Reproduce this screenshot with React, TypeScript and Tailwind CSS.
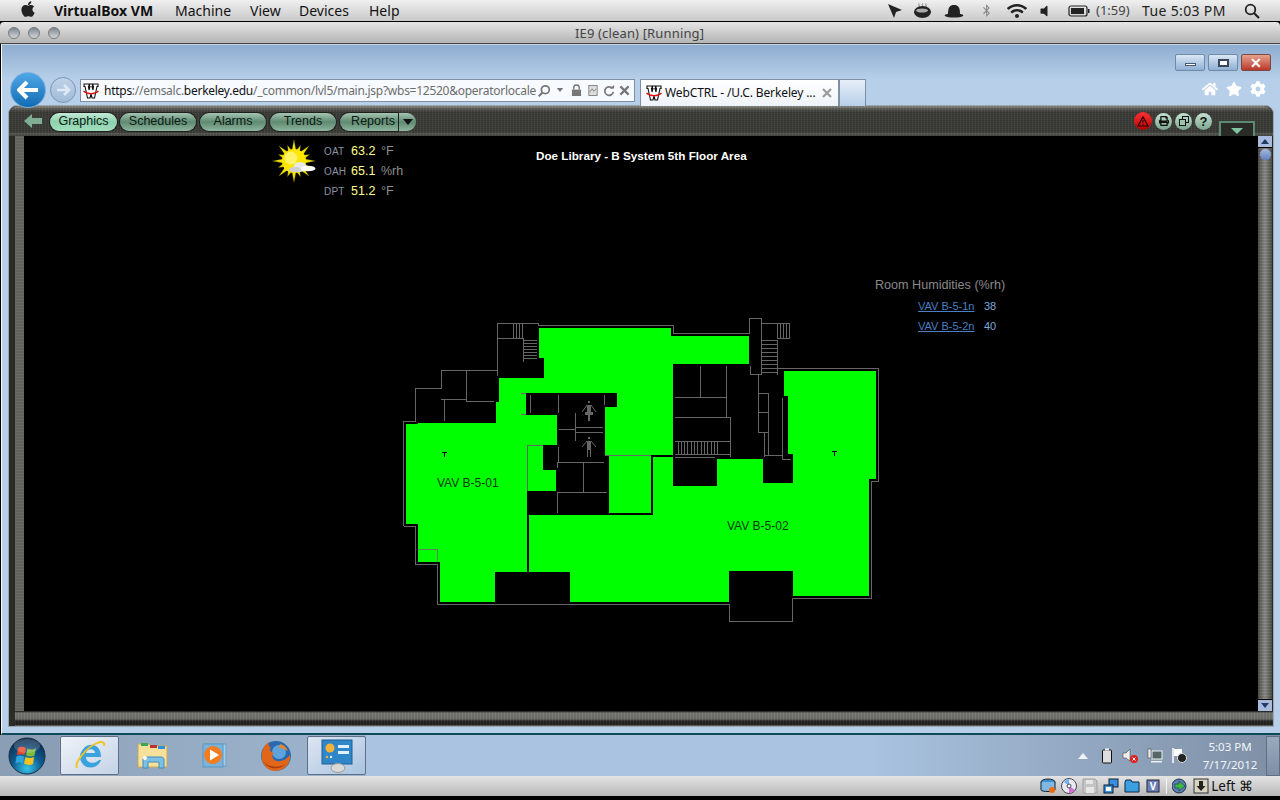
import React from "react";
import { FaApple, FaBluetoothB, FaWifi, FaVolumeOff, FaHome, FaStar, FaCog, FaPrint } from "react-icons/fa";

const green: string[] = [
  "539,328 671,328 671,336 749,336 749,364 673,364 673,455 605,455 605,407 617,407 617,393 526,393 526,415 557,415 557,445 527,445 527,572 495,572 495,602 440,602 440,562 418,562 418,524 406,524 406,424 418,424 418,423 496,423 496,402 499,402 499,378 544,378 544,358 539,358",
  "528,445 543,445 543,470 556,470 556,491 528,491",
  "609,456 651,456 651,513 609,513",
  "529,515 653,515 653,457 673,457 673,486 717,486 717,459 763,459 763,483 793,483 793,454 788,454 788,396 784,396 784,371 876,371 876,479 869,479 869,596 793,596 793,571 729,571 729,602 570,602 570,572 529,572",
];

const lines: string[] = [
  "403.5,526 403.5,421.5 415.5,421.5 415.5,388.5 441.5,388.5 441.5,370.5 497.5,370.5",
  "403.5,526 415.5,526 415.5,564.5 437.5,564.5 437.5,604.5 729.5,604.5 729.5,621.5 792.5,621.5 792.5,598.5 871.5,598.5 871.5,481.5 878.5,481.5 878.5,368.5 777.5,368.5",
  "497.5,376 497.5,323.5 538.5,323.5 538.5,325.5 673.5,325.5 673.5,333.5 749.5,333.5 749.5,318.5 761.5,318.5 761.5,374.5 750.5,374.5 750.5,366",
  "761.5,323.5 789.5,323.5 789.5,338.5 777,338.5",
  "777.5,340 777.5,375",
  "497.5,338.5 523.5,338.5 523.5,362",
  "441,399.5 466.5,399.5",
  "466.5,370 466.5,401.5 494,401.5",
  "444.5,399 444.5,421",
  "521,393.5 526,393.5",
  "521,414.5 526,414.5",
  "530.5,395 530.5,413",
  "558.5,395 558.5,413",
  "604.5,395 604.5,405",
  "575.5,413 575.5,441",
  "559,429.5 575,429.5",
  "576,427.5 603,427.5",
  "576,432.5 603,432.5",
  "558.5,447 558.5,462",
  "557.5,468 557.5,462.5 604,462.5",
  "583.5,462 583.5,492",
  "558,492.5 607,492.5",
  "557.5,492 557.5,513",
  "527.5,491 527.5,445.5 543,445.5",
  "605,455.5 651,455.5",
  "700.5,366 700.5,397",
  "726.5,366 726.5,417",
  "675,397.5 726,397.5",
  "675,417.5 730.5,417.5 730.5,457",
  "675,441.5 730,441.5",
  "675,454.5 730,454.5",
  "675,457.5 715,457.5",
  "758.5,374 758.5,432.5 768.5,432.5",
  "758,393.5 768.5,393.5 768.5,455",
  "758,412.5 768,412.5",
  "764.5,432 764.5,457",
  "764.5,455.5 782,455.5",
  "782.5,398 782.5,459.5 791,459.5",
];

const stairs = (): string[] => {
  const r: string[] = [];
  for (const x of [777.5, 780.5, 783.5, 786.5]) r.push(`${x},323 ${x},338`);
  for (let i = 0; i < 9; i++) r.push(`761,${340.5 + i * 4} 777,${340.5 + i * 4}`);
  for (const x of [513.5, 516.5, 519.5, 522.5]) r.push(`${x},323 ${x},338`);
  for (let i = 0; i < 7; i++) r.push(`523,${340.5 + i * 3} 537,${340.5 + i * 3}`);
  for (let i = 0; i < 13; i++) { const x = 677.5 + i * 3.3; r.push(`${Math.round(x) + 0.5},441 ${Math.round(x) + 0.5},454`); }
  return r;
};

function FloorPlan() {
  return (
    <svg className="absolute left-[376px] top-[179px]" width="490" height="310" viewBox="400 315 490 310" shapeRendering="crispEdges">
      {green.map((p) => <polygon key={p} points={p} fill="#00ff00" />)}
      <g fill="none" stroke="#666666" strokeWidth="1">
        {lines.concat(stairs()).map((p) => <polyline key={p} points={p} />)}
      </g>
      <path d="M418 549.5H437.500V562" fill="none" stroke="#5f7f5f" />
      <g fill="none" stroke="#000" strokeWidth="1">
        <path d="M442 452.500H447M444.500 452V457" />
        <path d="M832 451.500H837M834.500 451V456" />
      </g>
      <g fill="#666666">
        <rect x="588" y="401" width="2" height="2" />
        <rect x="587" y="405" width="4" height="8" />
        <rect x="585" y="412" width="8" height="3" />
        <rect x="588" y="415" width="2" height="6" />
        <rect x="588" y="437" width="2" height="2" />
        <rect x="587" y="441" width="4" height="9" />
        <rect x="587" y="450" width="1" height="7" />
        <rect x="590" y="450" width="1" height="7" />
      </g>
      <g fill="none" stroke="#666666" shapeRendering="auto">
        <path d="M582 412L587 405M596 412L591 405" />
        <path d="M582 447L587 441M596 447L591 441" />
      </g>
    </svg>
  );
}

function WIcon() {
  return (
    <svg width="16" height="16" viewBox="0 0 16 16" className="shrink-0">
      <path d="M1 1H6V3.500H5.500L6 7 7 3.500H6.500V1H9.500V3.500H9L10 7 10.500 3.500H10V1H15V3.500H14L11.500 15H9L8 11 7 15H4.500L2 3.500H1Z" fill="#fff" stroke="#111" strokeWidth="1.100" />
      <path d="M0.500 8C4 11.500 12 11.500 15.500 8" fill="none" stroke="#e01010" strokeWidth="1.200" />
    </svg>
  );
}

function Pill({ label, active, extra }: { label: string; active?: boolean; extra?: string }) {
  return (
    <div className={`h-[18px] rounded-full flex items-center justify-center text-[12.5px] font-['Liberation_Sans',Arial,sans-serif] text-[#0c1a12] shadow-[0_0_0_1px_#1c1f1c] ${active ? "bg-gradient-to-b from-[#c3e9d6] via-[#8cd2ae] to-[#a4dec0]" : "bg-gradient-to-b from-[#a5c4b2] via-[#5f8a72] to-[#8fb59f]"} ${extra ?? ""}`}>
      {label}
    </div>
  );
}

function RoundBtn({ children }: { children: React.ReactNode }) {
  return (
    <div className="w-[17px] h-[17px] rounded-full bg-gradient-to-b from-[#c4e0d0] to-[#7ba78f] flex items-center justify-center text-[#111]">
      {children}
    </div>
  );
}

function Weather() {
  const rays = Array.from({ length: 16 }, (_, i) => i * 22.5);
  return (
    <svg width="44" height="44" viewBox="-22 -22 44 44">
      {rays.map((a, i) => (
        <polygon key={a} points={`-2.400,-9 2.400,-9 0,${i % 2 ? -17 : -21.500}`} fill="#f4e400" stroke="#3a3a00" strokeWidth="0.300" transform={`rotate(${a})`} />
      ))}
      <circle r="12" fill="#ffe600" />
      <circle cx="-3" cy="-3" r="6.500" fill="#fff36a" />
      <ellipse cx="6" cy="6" rx="6.500" ry="5" fill="#e8e8e8" />
      <ellipse cx="14" cy="7.500" rx="7.500" ry="2.800" fill="#ffffff" />
      <ellipse cx="1" cy="8.500" rx="6" ry="2.800" fill="#cfcfcf" />
    </svg>
  );
}

function WRow({ l, v, u }: { l: string; v: string; u: string }) {
  return (
    <div className="flex h-[20px] items-center">
      <span className="w-[27px] text-[10px] tracking-[0.2px] text-[#8c93a3]">{l}</span>
      <span className="w-[30px] text-[12.5px] text-[#ffff8c]">{v}</span>
      <span className="text-[12.5px] text-[#8f8f8f]">{u}</span>
    </div>
  );
}

function Orb() {
  return (
    <svg width="38" height="38" viewBox="0 0 38 38">
      <defs>
        <radialGradient id="orb" cx="50%" cy="85%" r="80%">
          <stop offset="0" stopColor="#35c5e8" />
          <stop offset="0.5" stopColor="#0f5e92" />
          <stop offset="1" stopColor="#0a2a4e" />
        </radialGradient>
      </defs>
      <circle cx="19" cy="19" r="18" fill="url(#orb)" stroke="#1a2e44" />
      <path d="M10 11C13 9 15 10 18 11L16.500 18C14 17 12 17 9 18Z" fill="#e8482a" />
      <path d="M19.500 11.500C22 13 25 13 28 11L26.500 18.500C24 20 21 19.500 18 18.500Z" fill="#7fba3a" />
      <path d="M8.500 19.500C11 18 14 18.500 16 19.500L15 26C12 25 10 25 7.500 26.500Z" fill="#2fa5e0" />
      <path d="M17.500 20C20 21 23 21.500 26 20L25 27C22 28.500 19 28 16 26.500Z" fill="#f5c21c" />
      <ellipse cx="19" cy="9" rx="13" ry="7" fill="#ffffff" opacity="0.18" />
    </svg>
  );
}

function IEIcon() {
  return (
    <svg width="30" height="32" viewBox="0 0 30 32">
      <path d="M5 15C8 6 14 4 18 5C23 6 26 10 26 17H11C11 23 19 25 24 20H26C23 29 11 30 7 23C5 20 5 18 5 15ZM11 13H20C20 8 12 8 11 13Z" fill="#3ba2e0" />
      <path d="M2 28C-1 24 10 8 22 3C27 1 30 2 29 6" fill="none" stroke="#f4c21a" strokeWidth="1.800" />
    </svg>
  );
}

function FolderIcon() {
  return (
    <svg width="32" height="30" viewBox="0 0 32 30">
      <path d="M1 3H12L14 5H30V26H1Z" fill="#f7e09a" stroke="#c9a85a" />
      <rect x="4" y="2" width="7" height="3" fill="#3aa655" />
      <rect x="13" y="4" width="7" height="3" fill="#b33" />
      <rect x="21" y="5" width="7" height="3" fill="#2f8fd8" />
      <path d="M6 27V19C6 17 7 16 9 16H24C26 16 27 17 27 19V27H22V21H11V27Z" fill="#7cc0e6" stroke="#3f8dbc" />
      <circle cx="8" cy="17" r="2" fill="#fff" />
    </svg>
  );
}

function WMPIcon() {
  return (
    <svg width="32" height="28" viewBox="0 0 32 28">
      <rect x="7" y="2" width="20" height="22" fill="#a5cbe6" stroke="#6aa0c8" />
      <rect x="4" y="2" width="20" height="23" fill="#79b2da" stroke="#5f96bf" />
      <circle cx="14" cy="13" r="9" fill="#f47c20" />
      <path d="M11 7.500L20 13 11 18.500Z" fill="#fff" />
    </svg>
  );
}

function FirefoxIcon() {
  return (
    <svg width="32" height="32" viewBox="0 0 32 32">
      <circle cx="16" cy="16" r="15" fill="#2a68b0" />
      <circle cx="19" cy="12" r="7" fill="#5ea4dc" />
      <path d="M2 13C3 7 6 4 9 2C8 5 9 7 11 7C9 9 10 12 14 13C11 15 12 20 17 21C21 22 26 20 30 15C31 24 24 31 15 31C6 31 0 22 2 13Z" fill="#e0671a" />
      <path d="M4 22C8 29 19 31 26 24C20 28 10 28 4 22Z" fill="#a83a10" />
      <path d="M20 4C24 5 27 8 28 11C25 9 22 8 19 8Z" fill="#e8862a" />
    </svg>
  );
}

function PanelIcon() {
  return (
    <svg width="32" height="34" viewBox="0 0 32 34">
      <rect x="1" y="1" width="30" height="24" fill="#2f86c8" stroke="#1f5f96" />
      <circle cx="9" cy="9" r="4.500" fill="#f5b13a" />
      <rect x="17" y="6" width="11" height="3" fill="#dff0ff" />
      <rect x="17" y="12" width="11" height="3" fill="#dff0ff" />
      <circle cx="6" cy="18" r="1.200" fill="#f5b13a" />
      <circle cx="10" cy="18" r="1.200" fill="#dff0ff" />
      <ellipse cx="17" cy="29" rx="7" ry="4.500" fill="#d8d8d8" stroke="#999" />
    </svg>
  );
}

function MiniStatusIcons() {
  return (
    <div className="flex items-center h-[20px] gap-[5px]">
      <svg width="16" height="16" viewBox="0 0 16 16"><ellipse cx="8" cy="4" rx="7" ry="3" fill="#3f8fd0" stroke="#123" /><path d="M1 4V12C1 14 15 14 15 12V4" fill="#7fb8e0" stroke="#123" /><circle cx="12" cy="12" r="3" fill="#f06a10" /></svg>
      <svg width="16" height="16" viewBox="0 0 16 16"><circle cx="8" cy="8" r="7.500" fill="#e8e8f0" stroke="#445" /><path d="M8 8L3 4A7 7 0 0 1 8 1Z" fill="#70b0f0" /><path d="M8 8L14 12A7 7 0 0 1 8 15Z" fill="#d070d0" /><circle cx="8" cy="8" r="2" fill="#fff" stroke="#445" /></svg>
      <svg width="16" height="16" viewBox="0 0 16 16"><path d="M1 1H13L15 3V15H1Z" fill="#c4c4c4" stroke="#a0a0a0" /><rect x="4" y="2" width="7" height="4" fill="#e6e6e6" /><rect x="4" y="9" width="8" height="6" fill="#e6e6e6" /></svg>
      <svg width="16" height="16" viewBox="0 0 16 16"><rect x="6" y="1" width="9" height="8" fill="#3b8fe0" stroke="#123" /><rect x="1" y="7" width="9" height="8" fill="#3b8fe0" stroke="#123" /><rect x="3" y="9" width="5" height="4" fill="#fff" /></svg>
      <svg width="16" height="16" viewBox="0 0 16 16"><path d="M1 4L2 2H7L8 4H15V14H1Z" fill="#3aa0e0" stroke="#124" /></svg>
      <svg width="16" height="16" viewBox="0 0 16 16"><rect x="2" y="2" width="12" height="12" fill="#6c80b8" stroke="#223" /><text x="8" y="12" textAnchor="middle" fontSize="10" fontWeight="bold" fill="#fff">V</text></svg>
      <div className="w-px h-[16px] bg-[#f4f4f4]" />
      <svg width="16" height="16" viewBox="0 0 16 16"><circle cx="7" cy="8" r="7" fill="#5a7fb0" stroke="#234" /><path d="M7 3L13 8 7 13V10H3V6H7Z" fill="#3fb84a" stroke="#124" strokeWidth="0.500" /></svg>
      <svg width="16" height="16" viewBox="0 0 16 16"><rect x="1" y="1" width="14" height="14" fill="#d8d4c0" stroke="#333" /><path d="M6 3H10V8H12.500L8 13 3.500 8H6Z" fill="#222" /></svg>
      <span className="-ml-[3px] text-[13.5px] text-[#111]">{"Left \u2318"}</span>
    </div>
  );
}

export default function App() {
  const sans = "font-['Liberation_Sans',Arial,sans-serif]";
  return (
    <div className="w-[1280px] h-[800px] overflow-hidden flex flex-col bg-black font-['Noto_Sans',sans-serif]">
      {/* Mac menu bar */}
      <div className="h-[21px] shrink-0 flex items-center bg-gradient-to-b from-[#f0f0f0] to-[#c9c9c9] text-[14px] text-[#111]">
        <FaApple className="ml-[19px] text-[18px] text-[#222] -mt-[3px]" />
        <span className="ml-[17px] w-[121px] font-bold">VirtualBox VM</span>
        <span className="w-[75px]">Machine</span>
        <span className="w-[49px]">View</span>
        <span className="w-[70px]">Devices</span>
        <span>Help</span>
        <div className="ml-auto flex items-center text-[#222]">
          <svg width="16" height="16" viewBox="0 0 16 16" className="mr-[10px]"><path d="M1 1L15 7 9 9 7 15Z" fill="#222" /></svg>
          <svg width="19" height="16" viewBox="0 0 19 16" className="mr-[12px]"><path d="M6 0.500C5 2 7 2 6 4M9.500 0.500C8.500 2 10.500 2 9.500 4M13 0.500C12 2 14 2 13 4" fill="none" stroke="#777" /><ellipse cx="9.500" cy="9" rx="8.500" ry="6" fill="#222" /><ellipse cx="9" cy="7.500" rx="6" ry="2" fill="#aaa" /></svg>
          <svg width="20" height="14" viewBox="0 0 20 14" className="mr-[16px]"><path d="M4 10C4 3 6 1 10 1S16 3 16 10C18 10 20 11 19 12 16 14 4 14 1 12 0 11 2 10 4 10Z" fill="#222" /></svg>
          <FaBluetoothB className="text-[13px] text-[#8a8a8a] mr-[14px]" />
          <FaWifi className="text-[20px] mr-[10px]" />
          <FaVolumeOff className="text-[14px] mr-[17px]" />
          <svg width="22" height="12" viewBox="0 0 22 12" className="mr-[6px]"><rect x="1" y="1" width="18" height="10" rx="2" fill="none" stroke="#222" strokeWidth="1.200" /><rect x="3" y="3" width="13" height="6" fill="#222" /><rect x="20" y="4" width="1.500" height="4" fill="#222" /></svg>
          <span className="text-[13px] text-[#444] w-[46px]">(1:59)</span>
          <span className="w-[102px] tracking-[0.35px]">Tue 5:03 PM</span>
          <svg width="16" height="16" viewBox="0 0 16 16" className="mr-[20px]"><circle cx="6.500" cy="6.500" r="4.800" fill="none" stroke="#222" strokeWidth="1.800" /><path d="M10 10L15 15" stroke="#222" strokeWidth="2.200" /></svg>
        </div>
      </div>
      <div className="h-px shrink-0 bg-black" />
      {/* Title bar */}
      <div className="h-[22px] shrink-0 flex items-center bg-gradient-to-b from-[#e6e6e6] to-[#b4b4b4] border-b border-[#444] rounded-t-[4px] text-[13px] text-[#444]">
        <div className="flex gap-[8px] ml-[8px]">
          <div className="w-[12px] h-[12px] rounded-full bg-gradient-to-b from-[#7d8790] to-[#d3d7da] border border-[#777]" />
          <div className="w-[12px] h-[12px] rounded-full bg-gradient-to-b from-[#7d8790] to-[#d3d7da] border border-[#777]" />
          <div className="w-[12px] h-[12px] rounded-full bg-gradient-to-b from-[#7d8790] to-[#d3d7da] border border-[#777]" />
        </div>
        <span className="ml-[515px] mt-[2px] tracking-[0.15px]">IE9 (clean) [Running]</span>
      </div>

      {/* IE window */}
      <div className="h-[691px] shrink-0 flex flex-col ml-px border-l border-white bg-gradient-to-b from-[#8eadd0] via-[#b7cfe9] via-[5%] to-[#b7cfe9] border-t border-t-[#c8d4e0] border-b-[2px] border-b-[#0f4a58]">
        <div className="h-[27px] shrink-0 flex justify-end items-start pt-[9px] pr-[9px] gap-[3px]">
          <div className="w-[30px] h-[17px] rounded-[2px] border border-[#6f89a8] bg-gradient-to-b from-[#dbe7f5] to-[#8fb0d4] flex items-center justify-center"><div className="w-[11px] h-[3px] mt-[4px] bg-white border border-[#4a5a70]" /></div>
          <div className="w-[30px] h-[17px] rounded-[2px] border border-[#6f89a8] bg-gradient-to-b from-[#dbe7f5] to-[#8fb0d4] flex items-center justify-center"><div className="w-[11px] h-[8px] border-2 border-[#3b4656] bg-white" /></div>
          <div className="w-[30px] h-[17px] rounded-[2px] border border-[#7a4a40] bg-gradient-to-b from-[#e6a08e] to-[#b8362a] flex items-center justify-center text-white text-[14px] font-bold leading-none">{"\u2715"}</div>
        </div>
        <div className="h-[33px] shrink-0 flex items-start pl-[8px] relative z-10">
          <div className="w-[36px] h-[36px] rounded-full bg-gradient-to-b from-[#4fa8e8] to-[#0d6cb4] border border-[#7eb0d8] flex items-center justify-center">
            <svg width="22" height="20" viewBox="0 0 22 20"><path d="M10 2L2 10 10 18M3 10H21" fill="none" stroke="#fff" strokeWidth="4" /></svg>
          </div>
          <div className="mt-[5px] ml-[4px] w-[26px] h-[26px] rounded-full bg-gradient-to-b from-[#c0d3e8] to-[#9fbbd9] border border-[#7f94ad] flex items-center justify-center">
            <svg width="16" height="14" viewBox="0 0 16 14"><path d="M9 2L14 7 9 12M13 7H2" fill="none" stroke="#dfe9f4" strokeWidth="2.500" /></svg>
          </div>
          <div className="mt-[7px] ml-[4px] w-[555px] h-[23px] shrink-0 bg-[#f7faff] border border-[#7f8fa5] flex items-center pl-[2px] text-[12px] text-[#6d6d6d]">
            <WIcon />
            <div className="ml-[5px] w-[430px] shrink-0 whitespace-nowrap tracking-[-0.27px]">
              <span className="text-[#111]">https</span>://emsalc.<span className="text-[#111]">berkeley.edu</span>/_common/lvl5/main.jsp?wbs=12520&amp;operatorlocale
            </div>
            <svg width="14" height="14" viewBox="0 0 16 16" className="ml-[3px]"><circle cx="9.500" cy="6.500" r="4.500" fill="none" stroke="#777" strokeWidth="2" /><path d="M6 10L2 14" stroke="#777" strokeWidth="2.500" /></svg>
            <svg width="8" height="5" viewBox="0 0 10 6" className="ml-[5px]"><path d="M1 0H9L5 5Z" fill="#777" /></svg>
            <svg width="11" height="13" viewBox="0 0 12 14" className="ml-[7px]"><path d="M3 6V4A3 3 0 0 1 9 4V6" fill="none" stroke="#777" strokeWidth="1.500" /><rect x="1" y="6" width="10" height="7" fill="#777" /></svg>
            <svg width="10" height="13" viewBox="0 0 12 14" className="ml-[6px]"><rect x="1" y="1" width="10" height="12" fill="#ddd" stroke="#777" /><path d="M2 9L5 5 7 8 10 5" fill="none" stroke="#777" /></svg>
            <svg width="12" height="12" viewBox="0 0 14 14" className="ml-[5px]"><path d="M11 4A5 5 0 1 0 12 8" fill="none" stroke="#777" strokeWidth="2" /><path d="M8 4H13V0Z" fill="#777" /></svg>
            <svg width="11" height="11" viewBox="0 0 12 12" className="ml-[4px]"><path d="M1.500 1.500L10.500 10.500M10.500 1.500L1.500 10.500" stroke="#777" strokeWidth="2.400" /></svg>
          </div>
          <div className="mt-[7px] ml-[5px] w-[199px] h-[27px] bg-gradient-to-b from-[#ffffff] to-[#eef3fa] border border-b-0 border-[#7f8fa5] flex items-center pl-[5px] text-[12px] text-[#111]">
            <WIcon />
            <span className="ml-[3px] w-[157px] whitespace-nowrap tracking-[-0.12px]">{"WebCTRL - /U.C. Berkeley ..."}</span>
            <svg width="10" height="10" viewBox="0 0 10 10"><path d="M1 1L9 9M9 1L1 9" stroke="#9a9a9a" strokeWidth="2.200" /></svg>
          </div>
          <div className="mt-[7px] w-[27px] h-[27px] bg-gradient-to-b from-[#e8eff8] to-[#b7cfe9] border border-b-0 border-[#7f8fa5]" />
          <div className="ml-auto mt-[9px] mr-[14px] flex items-center gap-[8px] text-white text-[16px]">
            <FaHome />
            <FaStar />
            <FaCog />
          </div>
        </div>

        {/* WebCTRL frame */}
        <div className="h-[622px] shrink-0 ml-[6px] mr-[6px] flex flex-col rounded-t-[9px] border border-[#9aa5b0] bg-[#2b2b28]">
          <div className="h-[30px] shrink-0 flex items-center rounded-t-[9px] bg-[repeating-linear-gradient(90deg,rgba(255,255,255,0.03)_0px,rgba(255,255,255,0.03)_1px,rgba(0,0,0,0.05)_1px,rgba(0,0,0,0.05)_3px),repeating-linear-gradient(0deg,rgba(255,255,255,0.02)_0px,rgba(255,255,255,0.02)_1px,rgba(0,0,0,0.06)_1px,rgba(0,0,0,0.06)_2px),linear-gradient(180deg,#8f8f8a_0px,#5a5a55_3px,#3c3c38_6px,#3a3a36_26px,#5c5c58_28px,#3a3a36_30px)] pl-[14px] pr-[18px]">
            <svg width="20" height="16" viewBox="0 0 20 16" className="-mt-[1px]"><path d="M9 1V5H19V11H9V15L1 8Z" fill="#7fae93" /></svg>
            <div className="ml-[7px] mt-[1px] flex gap-[3px]">
              <Pill label="Graphics" active extra="w-[67px]" />
              <Pill label="Schedules" extra="w-[76px]" />
              <Pill label="Alarms" extra="w-[66px] ml-px" />
              <Pill label="Trends" extra="w-[66px] ml-px" />
              <div className="flex ml-px">
                <Pill label="Reports" extra="w-[58px] rounded-r-none pl-[8px]" />
                <div className="w-[17px] h-[18px] ml-px rounded-r-full bg-gradient-to-b from-[#a5c4b2] via-[#5f8a72] to-[#8fb59f] flex items-center justify-center">
                  <svg width="10" height="6" viewBox="0 0 10 6"><path d="M0 0H10L5 6Z" fill="#111" /></svg>
                </div>
              </div>
            </div>
            <div className="ml-auto flex items-center gap-[3px]">
              <div className="w-[18px] h-[18px] rounded-full bg-gradient-to-b from-[#ff3030] to-[#b00000] flex items-center justify-center">
                <svg width="12" height="11" viewBox="0 0 12 11"><path d="M6 1L11 10H1Z" fill="none" stroke="#200" strokeWidth="1.200" /><path d="M6 4V7M6 8V9" stroke="#200" /></svg>
              </div>
              <RoundBtn><FaPrint className="text-[10px]" /></RoundBtn>
              <RoundBtn>
                <svg width="10" height="10" viewBox="0 0 10 10"><rect x="3.500" y="0.500" width="6" height="6" fill="none" stroke="#111" /><rect x="0.500" y="3.500" width="6" height="6" fill="#9fc5b0" stroke="#111" /></svg>
              </RoundBtn>
              <RoundBtn><span className={`${sans} text-[13px] font-bold leading-none`}>?</span></RoundBtn>
              <div className="ml-[4px] mt-[14px] w-[36px] h-[15px] border-t-2 border-x-2 border-[#5d8a72] bg-[#2a2a27] flex items-end justify-center pb-[2px]">
                <svg width="12" height="6" viewBox="0 0 12 6"><path d="M0 0H12L6 6Z" fill="#7fc4a0" /></svg>
              </div>
            </div>
          </div>

          <div className="h-[575px] shrink-0 flex">
            <div className="w-[6px] shrink-0 bg-[#2b2b28]" />
            <div className="w-[9px] shrink-0 bg-[repeating-linear-gradient(0deg,#6c6c66_0px,#6c6c66_1px,#62625c_1px,#62625c_3px)]" />
            <div className={`relative w-[1234px] h-[575px] shrink-0 bg-black overflow-hidden ${sans}`}>
              <div className="absolute left-[248px] top-[3px]"><Weather /></div>
              <div className="absolute left-[300px] top-[5px] flex flex-col">
                <WRow l="OAT" v="63.2" u={"\u00b0F"} />
                <WRow l="OAH" v="65.1" u="%rh" />
                <WRow l="DPT" v="51.2" u={"\u00b0F"} />
              </div>
              <div className="absolute left-[512px] top-[11px] text-[11.7px] font-bold text-white whitespace-nowrap">Doe Library - B System 5th Floor Area</div>
              <div className="absolute left-[851px] top-[140px] text-[12.6px] text-[#8a8a8a] whitespace-nowrap">Room Humidities (%rh)</div>
              <div className="absolute left-[894px] top-[162px] flex text-[11px]">
                <span className="w-[66px] text-[#4a7fc0] underline">VAV B-5-1n</span><span className="text-[#7ea8d8]">38</span>
              </div>
              <div className="absolute left-[894px] top-[182px] flex text-[11px]">
                <span className="w-[66px] text-[#4a7fc0] underline">VAV B-5-2n</span><span className="text-[#7ea8d8]">40</span>
              </div>
              <FloorPlan />
              <div className="absolute left-[413px] top-[338px] text-[12px] text-[#0c3a0c] whitespace-nowrap">VAV B-5-01</div>
              <div className="absolute left-[703px] top-[381px] text-[12px] text-[#0c3a0c] whitespace-nowrap">VAV B-5-02</div>
            </div>
            <div className="w-[14px] h-[575px] shrink-0 flex flex-col bg-[repeating-linear-gradient(0deg,rgba(255,255,255,0.05)_0px,rgba(255,255,255,0.05)_1px,rgba(0,0,0,0.05)_1px,rgba(0,0,0,0.05)_3px),linear-gradient(90deg,#4a4a48,#8a8a86,#4a4a48)]">
              <div className="h-[12px] shrink-0 bg-[#a9bbdc] border-b border-black flex items-center justify-center">
                <svg width="8" height="5" viewBox="0 0 8 5"><path d="M4 0L8 5H0Z" fill="#223a66" /></svg>
              </div>
              <div className="mt-[1px] mx-auto w-[11px] h-[11px] rounded-full bg-gradient-to-b from-[#a9bbdc] to-[#5f7fc0]" />
              <div className="flex-1" />
              <div className="h-[12px] shrink-0 bg-[#a9bbdc] border-t border-black flex items-center justify-center">
                <svg width="8" height="5" viewBox="0 0 8 5"><path d="M0 0H8L4 5Z" fill="#223a66" /></svg>
              </div>
            </div>
          </div>
          <div className="flex-1 ml-[6px] bg-[repeating-linear-gradient(90deg,rgba(255,255,255,0.05)_0px,rgba(255,255,255,0.05)_1px,rgba(0,0,0,0.05)_1px,rgba(0,0,0,0.05)_3px),linear-gradient(180deg,#111_0px,#777773_2px,#6e6e6a_8px,#252522_10px,#222_14px,#9a9a96_15px)]" />
        </div>
        <div className="flex-1" />
      </div>

      {/* Taskbar */}
      <div className="h-[41px] shrink-0 flex items-center bg-gradient-to-r from-[#8ea2b8] via-[#a9c3e0] via-[50%] to-[#a9c3e0]">
        <div className="w-[59px] h-[41px] shrink-0 flex items-center pl-[8px] bg-[#8a9eb6]"><Orb /></div>
        <div className="w-[59px] h-[39px] flex items-center justify-center rounded-[2px] border border-[#5f6f86] bg-gradient-to-br from-[#f0f3f8] to-[#c4d3e6] ml-px"><IEIcon /></div>
        <div className="w-[64px] flex justify-center ml-[2px]"><FolderIcon /></div>
        <div className="w-[59px] flex justify-center"><WMPIcon /></div>
        <div className="w-[63px] flex justify-center"><FirefoxIcon /></div>
        <div className="w-[59px] h-[39px] flex items-center justify-center rounded-[2px] border border-[#5f6f86] bg-gradient-to-br from-[#dde6f2] to-[#a9c3e0]"><PanelIcon /></div>
        <div className="flex-1 self-stretch bg-gradient-to-r from-[#a9c3e0] via-[#a9c3e0] via-[55%] to-[#7e8fa5] flex items-center justify-end">
          <svg width="10" height="6" viewBox="0 0 10 6" className="mr-[14px]"><path d="M5 0L10 6H0Z" fill="#eef3f8" /></svg>
          <svg width="10" height="16" viewBox="0 0 10 16" className="mr-[10px]"><rect x="0.500" y="2" width="9" height="13" rx="1" fill="#ddd" stroke="#111" /><rect x="3" y="0.500" width="4" height="2" fill="#eee" /></svg>
          <svg width="16" height="16" viewBox="0 0 16 16" className="mr-[9px]"><path d="M1 5H4L8 1V13L4 10H1Z" fill="#eee" stroke="#333" strokeWidth="0.500" /><circle cx="12" cy="11" r="4" fill="#e02020" /><path d="M10.500 9.500L13.500 12.500M13.500 9.500L10.500 12.500" stroke="#fff" /></svg>
          <svg width="16" height="15" viewBox="0 0 16 15" className="mr-[8px]"><rect x="5" y="3" width="10" height="8" fill="#566" stroke="#eee" /><rect x="1" y="1" width="3" height="9" fill="#eee" stroke="#333" strokeWidth="0.500" /><rect x="4" y="13" width="11" height="1.500" fill="#eee" /></svg>
          <svg width="16" height="15" viewBox="0 0 16 15" className="mr-[16px]"><path d="M2 0V15" stroke="#fff" strokeWidth="1.500" /><path d="M3 1H11V8H3Z" fill="#fff" /><circle cx="11" cy="10" r="4.500" fill="#222" stroke="#ddd" /></svg>
          <div className="w-[54px] flex flex-col items-center text-[11.5px] leading-[18px] mt-[1px] text-[#f2f4f8] mr-[9px]">
            <span>5:03 PM</span>
            <span className="whitespace-nowrap">7/17/2012</span>
          </div>
          <div className="w-[14px] h-[40px] border border-[#5f6f86] bg-gradient-to-b from-[#9aaabc] to-[#7e8fa5]" />
        </div>
      </div>

      {/* VirtualBox status bar */}
      <div className="h-[20px] shrink-0 flex items-center justify-end pr-[27px] bg-gradient-to-b from-[#e4e4e4] to-[#b8b8b8]">
        <MiniStatusIcons />
      </div>
      <div className="flex-1 bg-black" />
    </div>
  );
}
